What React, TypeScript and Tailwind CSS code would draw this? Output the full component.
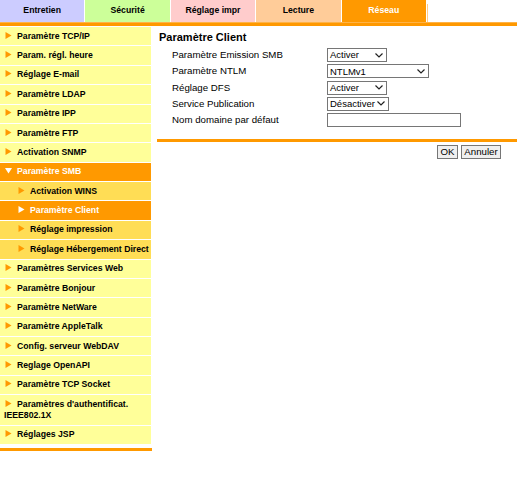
import React from "react"

const tabs = [
  { label: "Entretien", cls: "bg-[#ccccff] text-black" },
  { label: "Sécurité", cls: "bg-[#ccff99] text-black" },
  { label: "Réglage impr", cls: "bg-[#ffcccc] text-black" },
  { label: "Lecture", cls: "bg-[#ffcc99] text-black" },
  { label: "Réseau", cls: "bg-[#ff9900] text-white" },
]

type Item = { label: string; sub?: boolean; active?: boolean; open?: boolean }

const menu: Item[] = [
  { label: "Paramètre TCP/IP" },
  { label: "Param. régl. heure" },
  { label: "Réglage E-mail" },
  { label: "Paramètre LDAP" },
  { label: "Paramètre IPP" },
  { label: "Paramètre FTP" },
  { label: "Activation SNMP" },
  { label: "Paramètre SMB", active: true, open: true },
  { label: "Activation WINS", sub: true },
  { label: "Paramètre Client", sub: true, active: true },
  { label: "Réglage impression", sub: true },
  { label: "Réglage Hébergement Direct", sub: true },
  { label: "Paramètres Services Web" },
  { label: "Paramètre Bonjour" },
  { label: "Paramètre NetWare" },
  { label: "Paramètre AppleTalk" },
  { label: "Config. serveur WebDAV" },
  { label: "Reglage OpenAPI" },
  { label: "Paramètre TCP Socket" },
  { label: "Paramètres d'authentificat. IEEE802.1X" },
  { label: "Réglages JSP" },
]

function Arrow({ open, color }: { open?: boolean; color: string }) {
  return (
    <svg
      width="7"
      height="7"
      viewBox="0 0 7 7"
      className="inline-block mr-[5px] ml-px align-[0px]"
    >
      {open ? (
        <polygon points="0,1 7,1 3.5,6.5" fill={color} />
      ) : (
        <polygon points="0.5,0 6.5,3.5 0.5,7" fill={color} />
      )}
    </svg>
  )
}

function MenuItem({ item }: { item: Item }) {
  const bg = item.active
    ? "bg-[#ff9900] text-white"
    : item.sub
    ? "bg-[#ffdd55] text-black"
    : "bg-[#ffff99] text-black"
  return (
    <div
      className={`${bg} border-b border-white py-[3.7px] leading-[11px] text-[8.7px] font-bold ${
        item.sub ? "pl-[17px]" : "pl-[4px]"
      }`}
    >
      <Arrow open={item.open} color={item.active ? "#ffffff" : "#ff9900"} />
      {item.label}
    </div>
  )
}

function Select({ value, w }: { value: string; w: string }) {
  return (
    <div
      className={`${w} h-[14px] border border-[#767676] bg-white flex items-center justify-between pl-[2px] pr-[3px] text-[9.5px] leading-none text-black`}
    >
      <span>{value}</span>
      <svg width="8" height="5" viewBox="0 0 8 5" className="ml-[2px] shrink-0">
        <polyline points="0.5,0.5 4,4 7.5,0.5" fill="none" stroke="#222" strokeWidth="1.2" />
      </svg>
    </div>
  )
}

export default function App() {
  const rows: { label: string; ctl: React.ReactNode }[] = [
    { label: "Paramètre Emission SMB", ctl: <Select value="Activer" w="w-[60px]" /> },
    { label: "Paramètre NTLM", ctl: <Select value="NTLMv1" w="w-[102px]" /> },
    { label: "Réglage DFS", ctl: <Select value="Activer" w="w-[60px]" /> },
    { label: "Service Publication", ctl: <Select value="Désactiver" w="w-[62px]" /> },
    {
      label: "Nom domaine par défaut",
      ctl: <div className="w-[134px] h-[14px] border border-[#767676] bg-white" />,
    },
  ]

  return (
    <div className="w-[517px] h-[484px] bg-white font-['Liberation_Sans',Arial,sans-serif] text-black">
      {/* Tabs */}
      <div className="flex gap-px h-[22px]">
        {tabs.map((t) => (
          <div
            key={t.label}
            className={`${t.cls} w-[84.4px] flex items-center justify-center text-[8.7px] font-bold`}
          >
            {t.label}
          </div>
        ))}
        <div className="flex-1 mt-[4px] border-l border-[#ffcc88]" />
      </div>
      <div className="h-[4px] bg-[#ff9900] border-t border-[#ffb347]" />

      <div className="flex">
        {/* Sidebar */}
        <div className="w-[152px] mt-px">
          <div className="w-[151px]">
            {menu.map((m) => (
              <MenuItem key={m.label} item={m} />
            ))}
          </div>
          <div className="mt-[3px] h-[3px] bg-[#ff9900]" />
        </div>

        {/* Content */}
        <div className="flex-1 ml-[5px]">
          <div className="pl-[2px] pt-[3px] h-[22px] text-[11px] font-bold leading-[16px]">
            Paramètre Client
          </div>
          <div className="pl-[15px] flex flex-col gap-[2.3px]">
            {rows.map((r) => (
              <div key={r.label} className="flex items-center h-[14px]">
                <div className="w-[155px] text-[9.7px] leading-none">{r.label}</div>
                {r.ctl}
              </div>
            ))}
          </div>
          <div className="mt-[12px] h-[3px] bg-[#ff9900]" />
          <div className="flex justify-end gap-[3px] pr-[16px] mt-[3px]">
            <button className="h-[14px] w-[21px] border border-[#767676] bg-[#efefef] text-[9.7px] leading-none">
              OK
            </button>
            <button className="h-[14px] w-[40px] border border-[#767676] bg-[#efefef] text-[9.7px] leading-none">
              Annuler
            </button>
          </div>
        </div>
      </div>
    </div>
  )
}
